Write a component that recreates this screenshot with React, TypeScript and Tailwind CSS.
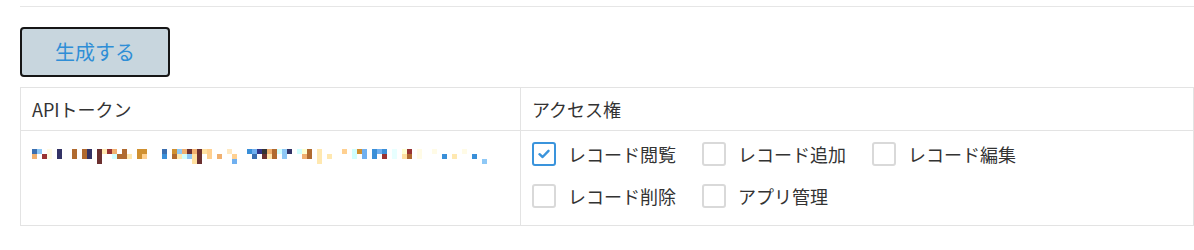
import React from 'react'

// モザイク処理されたトークン (x, y, color)
const mosaic: [number, number, string][] = [
  // row 1
  [32, 0, '#3b6fb0'], [37, 0, '#8ec8f6'], [47, 0, '#fffbe6'], [57, 0, '#333366'],
  [72, 0, '#b06a30'], [82, 0, '#b06a30'], [87, 0, '#333366'], [97, 0, '#6b3030'],
  [102, 0, '#ffe8b0'], [107, 0, '#993333'], [112, 0, '#f0b070'], [122, 0, '#b06a30'],
  [137, 0, '#d09030'], [142, 0, '#d09030'], [162, 0, '#3b6fb0'], [172, 0, '#d09030'],
  [177, 0, '#8ec8f6'], [182, 0, '#f0b070'], [187, 0, '#6b3030'], [192, 0, '#f0b070'],
  [197, 0, '#6b3030'], [202, 0, '#ffe0a0'], [207, 0, '#ffd090'], [227, 0, '#ffe8c0'],
  [247, 0, '#3a8fd8'], [252, 0, '#70b0f0'], [257, 0, '#333388'], [262, 0, '#333333'],
  [267, 0, '#f0b070'], [272, 0, '#b06a30'], [277, 0, '#d0ffff'], [282, 0, '#8ec8f6'],
  [287, 0, '#333366'], [297, 0, '#d0ffff'], [302, 0, '#ffffd0'], [307, 0, '#b06a30'],
  [317, 0, '#ffe8b0'], [342, 0, '#ffd090'], [352, 0, '#d0ffff'], [357, 0, '#d09030'],
  [362, 0, '#70b0f0'], [372, 0, '#3a8fd8'], [377, 0, '#70b0f0'], [382, 0, '#3a8fd8'],
  [392, 0, '#e8ffff'], [402, 0, '#ffffd0'], [407, 0, '#993333'], [417, 0, '#fffbe6'],
  [432, 0, '#fffbe6'], [462, 0, '#fffbe6'],
  // row 2
  [32, 5, '#f0b070'], [42, 5, '#993333'], [47, 5, '#fffbe6'], [57, 5, '#333366'],
  [72, 5, '#b06a30'], [82, 5, '#b06a30'], [87, 5, '#333366'], [97, 5, '#6b3030'],
  [112, 5, '#d0ffff'], [117, 5, '#b06a30'], [122, 5, '#b06a30'], [127, 5, '#ffe8b0'],
  [137, 5, '#d09030'], [142, 5, '#ffd090'], [162, 5, '#3a8fd8'], [172, 5, '#b06a30'],
  [177, 5, '#ffe8b0'], [182, 5, '#d0ffff'], [187, 5, '#8ec8f6'], [192, 5, '#ffe0a0'],
  [197, 5, '#6b3030'], [207, 5, '#ffd090'], [217, 5, '#f0b070'], [232, 5, '#ffd090'],
  [252, 5, '#3b6fb0'], [262, 5, '#6b3030'], [267, 5, '#ffe8b0'], [272, 5, '#b06a30'],
  [282, 5, '#8ec8f6'], [302, 5, '#f0b070'], [307, 5, '#b06a30'], [317, 5, '#ffe8b0'],
  [327, 5, '#ffe8b0'], [352, 5, '#d0ffff'], [362, 5, '#70b0f0'], [372, 5, '#3a8fd8'],
  [382, 5, '#993333'], [392, 5, '#e8ffff'], [402, 5, '#ffe0a0'], [407, 5, '#b06a30'],
  [417, 5, '#fffbe6'], [442, 5, '#3a8fd8'], [452, 5, '#ffe8b0'], [472, 5, '#3a8fd8'],
  // row 3
  [97, 10, '#6b3030'], [192, 10, '#ffe0a0'], [197, 10, '#6b3030'], [232, 10, '#70b0f0'],
  [317, 10, '#ffe8b0'], [482, 10, '#8ec8f6'],
]

function Checkbox({ label, checked = false }: { label: string; checked?: boolean }) {
  return (
    <label className="flex items-center gap-[12px] mr-[26px]">
      <span
        className={`flex items-center justify-center w-[24px] h-[24px] rounded-[3px] border-2 bg-white ${
          checked ? 'border-[#3a94dc]' : 'border-[#d9d9d9]'
        }`}
      >
        {checked && (
          <svg width="12" height="10" viewBox="0 0 12 10">
            <path d="M1.5 5.2 L4.6 8 L10.5 1.8" fill="none" stroke="#3a94dc" strokeWidth="2.4" strokeLinecap="round" strokeLinejoin="round" />
          </svg>
        )}
      </span>
      <span className="text-[18px] leading-[24px] text-[#333]">{label}</span>
    </label>
  )
}

export default function App() {
  return (
    <div
      className="bg-white min-h-[250px] pl-[20px] pt-[6px]"
      style={{ fontFamily: '"Noto Sans CJK JP", "Noto Sans", sans-serif' }}
    >
      <div className="h-px bg-[#e6e6e6]" />

      <button className="mt-[20px] w-[150px] h-[50px] rounded-[4px] border-2 border-[#161616] bg-[#c8d6de] text-[20px] text-[#2f8ed6]">
        生成する
      </button>

      <div className="mt-[10px] grid grid-cols-[500px_1fr] border-l border-t border-[#e3e3e3] text-[#333]">
        <div className="h-[43px] border-r border-b border-[#e3e3e3] pl-[11px] flex items-center text-[18px]">
          APIトークン
        </div>
        <div className="h-[43px] border-r border-b border-[#e3e3e3] pl-[11px] flex items-center text-[18px]">
          アクセス権
        </div>

        <div className="h-[95px] border-r border-b border-[#e3e3e3] pl-[11px] pt-[18px]">
          <svg width="460" height="15" viewBox="0 0 460 15" shapeRendering="crispEdges">
            {mosaic.map(([x, y, c], i) => (
              <rect key={i} x={x - 32} y={y} width="5" height="5" fill={c} />
            ))}
          </svg>
        </div>
        <div className="h-[95px] border-r border-b border-[#e3e3e3] pl-[11px] pt-[11px] flex flex-col gap-[18px]">
          <div className="flex">
            <Checkbox label="レコード閲覧" checked />
            <Checkbox label="レコード追加" />
            <Checkbox label="レコード編集" />
          </div>
          <div className="flex">
            <Checkbox label="レコード削除" />
            <Checkbox label="アプリ管理" />
          </div>
        </div>
      </div>
    </div>
  )
}
